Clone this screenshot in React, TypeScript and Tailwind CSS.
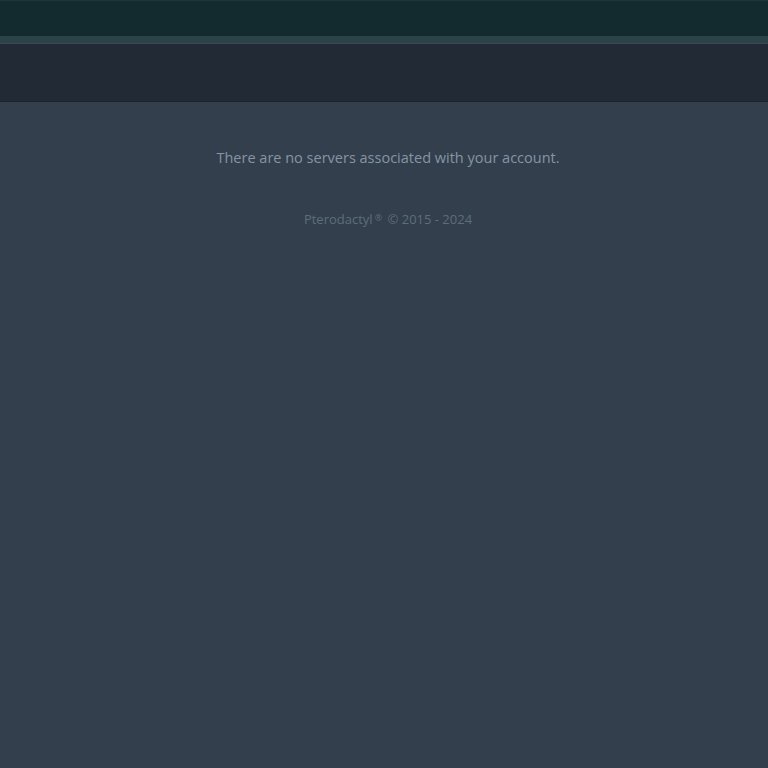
export default function App() {
    return (
        <div className="min-h-screen w-full flex flex-col bg-[#333f4c]" style={{ fontFamily: '"Open Sans", "Noto Sans", sans-serif' }}>
            <div className="h-[36px] w-full bg-[#132a2e] border-t border-[#1d3639]" />
            <div className="h-[7px] w-full bg-[#2b4249]" />
            <div className="h-[59px] w-full bg-[#212a35] border-t border-[#3a4955] border-b border-b-[#1c232c]" />
            <main className="flex flex-col items-center pt-[45px] pl-[8px]">
                <p className="text-[14.5px] text-[#8595a5]">There are no servers associated with your account.</p>
                <p className="mt-[41px] text-[13px] text-[#5d6d7d]">
                    Pterodactyl<span className="relative -top-[3px] text-[9px] ml-[2px] mr-[2px]">®</span> &copy; 2015 - 2024
                </p>
            </main>
        </div>
    );
}
